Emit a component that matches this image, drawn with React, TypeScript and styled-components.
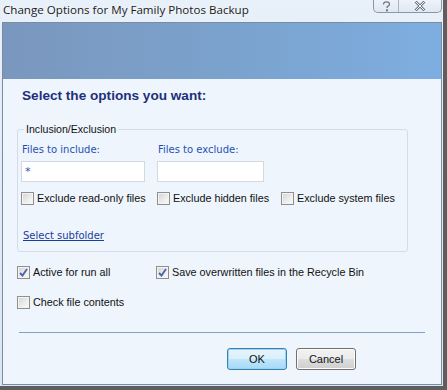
import React from 'react';
import styled, { createGlobalStyle } from 'styled-components';

const Global = createGlobalStyle`
  html, body { margin: 0; padding: 0; background: #5e5e5e; }
  body { width: 447px; height: 390px; overflow: hidden; }
  * { box-sizing: border-box; }
`;

const Frame = styled.div`
  width: 443px;
  height: 386px;
  background: linear-gradient(180deg, #e8f0f9 0%, #dae6f3 100%);
  display: flex;
  flex-direction: column;
  padding: 0 1px 1px 2px;
`;

const TitleBar = styled.div`
  height: 22px;
  display: flex;
  align-items: flex-start;
`;

const Title = styled.div`
  font-family: "Open Sans", "Liberation Sans", sans-serif;
  font-size: 11.6px;
  line-height: 18px;
  color: #1b1b1b;
  padding: 1px 0 0 1px;
  text-shadow: 0 0 6px rgba(255, 255, 255, 0.9);
`;

const Caption = styled.div`
  margin-left: auto;
  display: flex;
  height: 13px;
  border: 1px solid #8a97a8;
  border-top: none;
  border-radius: 0 0 5px 5px;
  background: linear-gradient(180deg, #eef3f9, #dfe7f1);
  overflow: hidden;
`;

const CapBtn = styled.div<{ $w: number; $sep?: boolean }>`
  width: ${(p) => p.$w}px;
  display: flex;
  align-items: center;
  justify-content: center;
  border-right: ${(p) => (p.$sep ? '1px solid #a9b5c4' : 'none')};
`;

const Content = styled.div`
  flex: 1;
  border: 1px solid #7b8ca2;
  background: #eef5fc;
  display: flex;
  flex-direction: column;
`;

const Band = styled.div`
  height: 56px;
  background: linear-gradient(90deg, #7a97be 0%, #7ba4d0 60%, #7eaee1 100%);
`;

const Body = styled.div`
  flex: 1;
  display: flex;
  flex-direction: column;
  padding: 8px 16px 0 14px;
`;

const Heading = styled.div`
  font-family: "Liberation Sans", Arial, sans-serif;
  font-weight: bold;
  font-size: 13.6px;
  line-height: 18px;
  color: #1d2f7a;
  padding-left: 5px;
`;

const Group = styled.fieldset`
  margin: 18px 0 0 0;
  width: 391px;
  height: 129px;
  border: 1px solid #d3dde7;
  border-radius: 3px;
  padding: 0 0 0 3px;
  display: flex;
  flex-direction: column;
`;

const Legend = styled.legend`
  font-family: "Liberation Sans", Arial, sans-serif;
  font-size: 10.6px;
  color: #111;
  padding: 0 2px;
  margin-left: 3px;
  line-height: 13px;
`;

const Grid = styled.div<{ $top?: number }>`
  display: grid;
  grid-template-columns: 136px 124px auto;
  margin-top: ${(p) => p.$top ?? 0}px;
`;

const FieldLabel = styled.div`
  font-family: "DejaVu Sans", Verdana, sans-serif;
  font-size: 10px;
  line-height: 14px;
  color: #2650b4;
  padding: 7px 0 0 1px;
  height: 25px;
`;

const Input = styled.div<{ $w: number }>`
  width: ${(p) => p.$w}px;
  height: 21px;
  background: #fff;
  border: 1px solid #d4d9de;
  font-family: "DejaVu Sans", Verdana, sans-serif;
  font-size: 11px;
  color: #2650b4;
  padding: 3px 0 0 3px;
  line-height: 14px;
`;

const CheckRow = styled.label`
  display: flex;
  align-items: center;
  gap: 3px;
  font-family: "Liberation Sans", Arial, sans-serif;
  font-size: 10.8px;
  color: #111;
  height: 14px;
  white-space: nowrap;
`;

const Box = styled.span`
  width: 13px;
  height: 13px;
  border: 1px solid #8f8f8f;
  background: linear-gradient(135deg, #d2d2d2 0%, #eeeeee 60%, #fafafa 100%);
  box-shadow: inset 0 0 0 1px #f4f4f4;
  display: flex;
  align-items: center;
  justify-content: center;
  flex: none;
`;

const Link = styled.a`
  font-family: "DejaVu Sans", Verdana, sans-serif;
  font-size: 10px;
  color: #1b3e9e;
  text-decoration: underline;
  margin: 24px 0 0 2px;
  line-height: 14px;
  align-self: flex-start;
`;

const OptRow = styled.div<{ $top: number }>`
  display: grid;
  grid-template-columns: 139px auto;
  margin-top: ${(p) => p.$top}px;
`;

const Separator = styled.div`
  margin: 23px 0 0 2px;
  width: 406px;
  height: 1px;
  background: #7ea1c8;
`;

const Buttons = styled.div`
  display: flex;
  gap: 9px;
  margin: 15px 0 0 210px;
`;

const Button = styled.button<{ $default?: boolean }>`
  width: 60px;
  height: 22px;
  border-radius: 3px;
  font-family: "Liberation Sans", Arial, sans-serif;
  font-size: 11px;
  color: #111;
  padding: 0;
  border: 1px solid ${(p) => (p.$default ? '#3c7fb1' : '#707070')};
  background: ${(p) =>
    p.$default
      ? 'linear-gradient(180deg, #e8f5fc 0%, #d9effa 48%, #bee6fd 52%, #a7d9f5 100%)'
      : 'linear-gradient(180deg, #f2f2f2 0%, #ebebeb 48%, #dddddd 52%, #cfcfcf 100%)'};
  box-shadow: inset 0 0 0 1px ${(p) => (p.$default ? '#98d5f3' : '#fcfcfc')};
`;

const Check = () => (
  <svg width="9" height="9" viewBox="0 0 9 9">
    <path d="M1 5 L3.5 7.5 L8 1" fill="none" stroke="#4a63a8" strokeWidth="1.8" />
  </svg>
);

const Checkbox: React.FC<{ checked?: boolean; label: string }> = ({ checked, label }) => (
  <CheckRow>
    <Box>{checked ? <Check /> : null}</Box>
    {label}
  </CheckRow>
);

export default function App() {
  return (
    <>
      <Global />
      <Frame>
        <TitleBar>
          <Title>Change Options for My Family Photos Backup</Title>
          <Caption>
            <CapBtn $w={25} $sep>
              <svg width="9" height="11" viewBox="0 0 9 11">
                <path d="M1.5 3.5 Q1.5 0.8 4.5 0.8 Q7.5 0.8 7.5 3.2 Q7.5 4.8 5.2 5.6 L5.2 7" fill="none" stroke="#6b7686" strokeWidth="1.3" />
                <rect x="4" y="8.3" width="2" height="2" fill="#6b7686" />
              </svg>
            </CapBtn>
            <CapBtn $w={42}>
              <svg width="12" height="10" viewBox="0 0 12 10">
                <path d="M1.5 0.5 L10.5 9.5 M10.5 0.5 L1.5 9.5" fill="none" stroke="#6b7686" strokeWidth="2.6" />
                <path d="M1.5 0.5 L10.5 9.5 M10.5 0.5 L1.5 9.5" fill="none" stroke="#f5f7fa" strokeWidth="1" />
              </svg>
            </CapBtn>
          </Caption>
        </TitleBar>
        <Content>
          <Band />
          <Body>
            <Heading>Select the options you want:</Heading>
            <Group>
              <Legend>Inclusion/Exclusion</Legend>
              <Grid>
                <FieldLabel>Files to include:</FieldLabel>
                <FieldLabel>Files to exclude:</FieldLabel>
                <div />
                <Input $w={124}>*</Input>
                <Input $w={107} />
                <div />
              </Grid>
              <Grid $top={9}>
                <Checkbox label="Exclude read-only files" />
                <Checkbox label="Exclude hidden files" />
                <Checkbox label="Exclude system files" />
              </Grid>
              <Link href="#">Select subfolder</Link>
            </Group>
            <OptRow $top={13}>
              <Checkbox checked label="Active for run all" />
              <Checkbox checked label="Save overwritten files in the Recycle Bin" />
            </OptRow>
            <OptRow $top={16}>
              <Checkbox label="Check file contents" />
            </OptRow>
            <Separator />
            <Buttons>
              <Button $default>OK</Button>
              <Button>Cancel</Button>
            </Buttons>
          </Body>
        </Content>
      </Frame>
    </>
  );
}
